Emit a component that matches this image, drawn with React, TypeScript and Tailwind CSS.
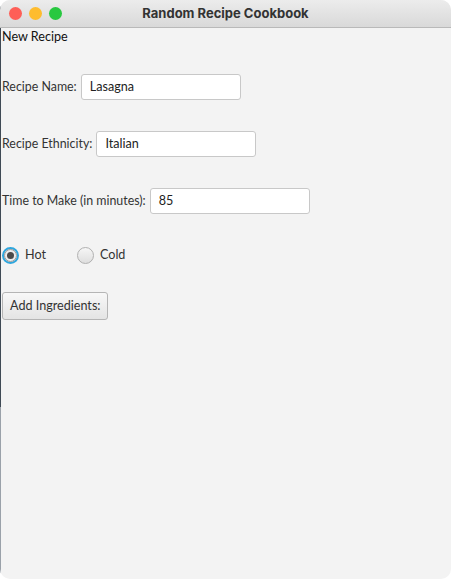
import { ReactNode } from 'react';

const Row = ({ label, value, className }: { label: string; value: string; className?: string }) => (
  <div className={`flex items-center h-[26px] ${className ?? ''}`}>
    <span className="pl-[2px] pr-[4px] text-[12.4px] text-[#333] pt-[1px]">{label}</span>
    <div className="w-[160px] h-[26px] bg-white border border-[#c8c8c8] rounded-[3px] flex items-center px-[8px] pt-[1px] text-[12.6px] text-[#222]">
      {value}
    </div>
  </div>
);

const Radio = ({ checked, children }: { checked?: boolean; children: ReactNode }) => (
  <div className="flex items-center gap-[6px]">
    {checked ? (
      <div className="w-[17px] h-[17px] rounded-full border-2 border-[#2fa6dd] flex items-center justify-center bg-[#f0f0f0]">
        <div className="w-[13px] h-[13px] rounded-full border border-[#9a9a9a] bg-[#ececec] flex items-center justify-center">
          <div className="w-[7px] h-[7px] rounded-full bg-[#4a4a4a]" />
        </div>
      </div>
    ) : (
      <div className="w-[17px] h-[17px] rounded-full border border-[#b0b0b0] bg-gradient-to-b from-[#f6f6f6] to-[#dedede]" />
    )}
    <span className="text-[12.6px] text-[#333]">{children}</span>
  </div>
);

export default function App() {
  return (
    <div className="relative w-[451px] h-[579px] bg-[#f3f3f3] flex flex-col overflow-hidden rounded-[10px] font-['Lato','Liberation_Sans',sans-serif]">
      {/* left window edge */}
      <div className="absolute left-0 top-0 w-[1px] h-[407px] bg-[#3f4a55]" />
      <div className="absolute left-0 top-[407px] w-[1px] h-[172px] bg-[#9aa1a9]" />

      {/* Title bar */}
      <div className="relative h-[28px] shrink-0 bg-gradient-to-b from-[#ececec] to-[#d9d9d9] border-b border-[#b9b9b9] flex items-center justify-center">
        <div className="absolute left-[9px] top-[7px] flex gap-[7px]">
          <div className="w-[13px] h-[13px] rounded-full bg-[#fe5f57]" />
          <div className="w-[13px] h-[13px] rounded-full bg-[#febc2e]" />
          <div className="w-[13px] h-[13px] rounded-full bg-[#28c840]" />
        </div>
        <span className="text-[13px] font-bold text-[#333] font-['Inter','Liberation_Sans',sans-serif]">Random Recipe Cookbook</span>
      </div>

      <div className="flex flex-col items-start">
        <span className="pl-[2px] mt-[1px] text-[12.6px] text-[#111] leading-[16px]">New Recipe</span>
        <Row className="mt-[29px]" label="Recipe Name:" value="Lasagna" />
        <Row className="mt-[31px]" label="Recipe Ethnicity:" value="Italian" />
        <Row className="mt-[31px]" label="Time to Make (in minutes):" value="85" />
        <div className="mt-[32px] ml-[2px] flex items-center gap-[31px] h-[18px]">
          <Radio checked>Hot</Radio>
          <Radio>Cold</Radio>
        </div>
        <button className="mt-[28px] ml-[2px] h-[28px] px-[7px] rounded-[3px] border border-[#b5b5b5] bg-gradient-to-b from-[#f8f8f8] to-[#e4e4e4] text-[12.6px] text-[#333]">
          Add Ingredients:
        </button>
      </div>
    </div>
  );
}
